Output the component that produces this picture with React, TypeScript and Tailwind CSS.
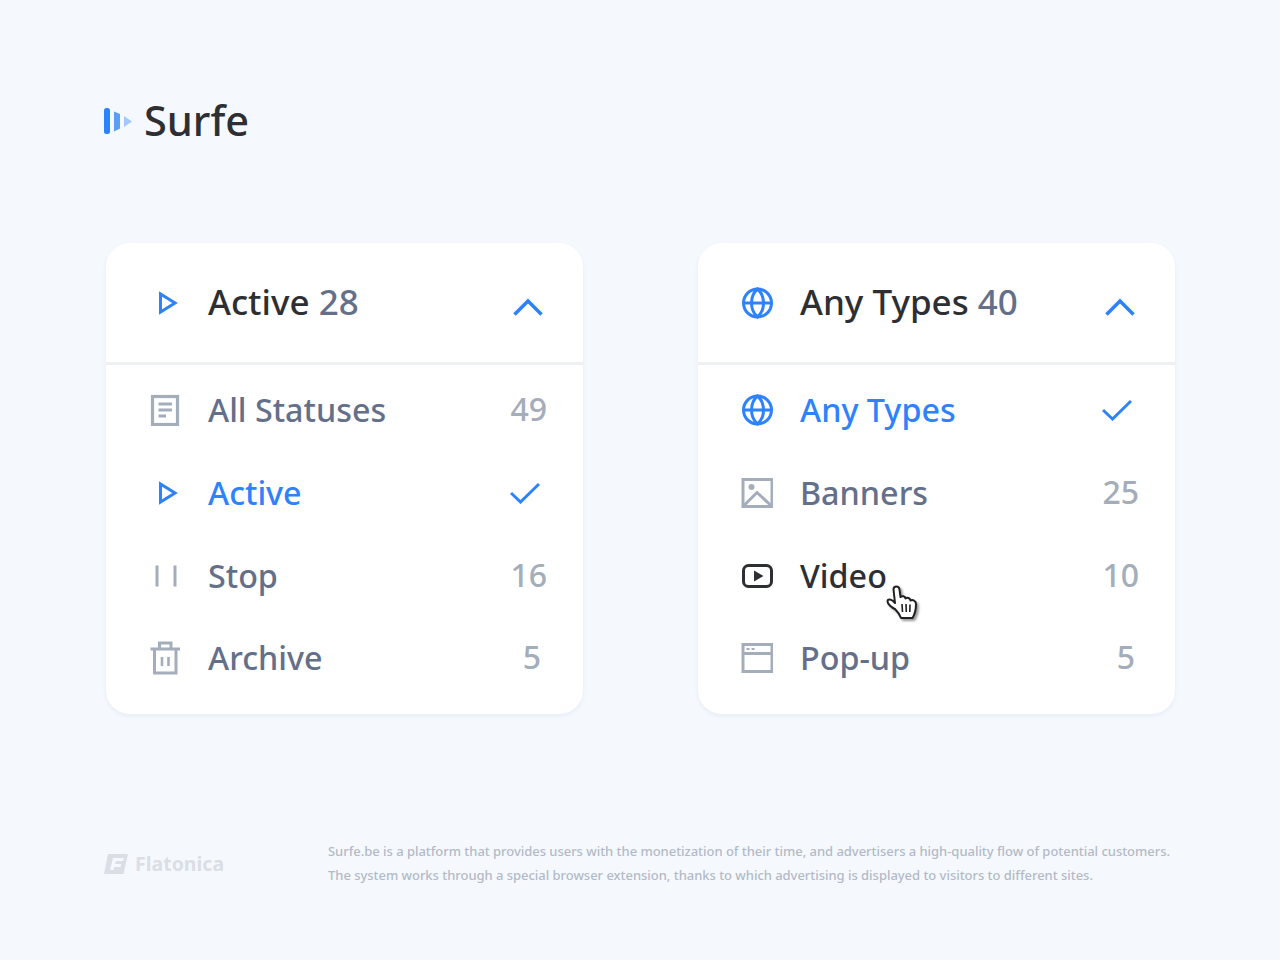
import React from 'react';

const BLUE = '#2e82fb';

const PlayIcon = () => (
  <svg width="32" height="32" viewBox="0 0 32 32" fill="none" stroke={BLUE} strokeWidth="3">
    <path d="M11.5 7 V25 L26 16 Z" />
  </svg>
);

const GlobeIcon = ({ color = BLUE }: { color?: string }) => (
  <svg width="32" height="32" viewBox="0 0 32 32" fill="none" stroke={color} strokeWidth="3">
    <circle cx="16.5" cy="16" r="14" />
    <path d="M2.5 16 H30.5 M16.5 2 C8.5 9 8.5 23 16.5 30 C24.5 23 24.5 9 16.5 2 Z" />
  </svg>
);

const DocIcon = () => (
  <svg width="32" height="32" viewBox="0 0 32 32" fill="none" stroke="#a4adba" strokeWidth="3.2">
    <rect x="3.5" y="2.5" width="25" height="28" />
    <path d="M9.5 10 H23 M9.5 16 H23 M9.5 22 H17" strokeWidth="2.8" />
  </svg>
);

const PauseIcon = () => (
  <svg width="32" height="32" viewBox="0 0 32 32" fill="none" stroke="#a4adba" strokeWidth="3">
    <path d="M8 5.5 V26.5 M26 5.5 V26.5" />
  </svg>
);

const TrashIcon = () => (
  <svg width="32" height="36" viewBox="0 0 32 36" fill="none" stroke="#a4adba" strokeWidth="3">
    <path d="M1.5 9 H31 M5.5 9 V33 H27 V9 M10.5 9 V3 H22 V9" />
    <path d="M13 17 V26 M19.5 17 V26" strokeWidth="2.6" />
  </svg>
);

const ImageIcon = () => (
  <svg width="32" height="32" viewBox="0 0 32 32" fill="none" stroke="#a4adba" strokeWidth="3">
    <rect x="2" y="2.5" width="29" height="27" />
    <circle cx="10.5" cy="10" r="3" fill="#a4adba" stroke="none" />
    <path d="M3 28.5 L16 15.5 L30 28.5" />
  </svg>
);

const VideoIcon = () => (
  <svg width="32" height="32" viewBox="0 0 32 32" fill="none">
    <rect x="2.5" y="5.5" width="28" height="21" rx="5" stroke="#2d2f33" strokeWidth="3" />
    <path d="M13 10.5 V21.5 L22.5 16 Z" fill="#2d2f33" />
  </svg>
);

const PopupIcon = () => (
  <svg width="32" height="32" viewBox="0 0 32 32" fill="none" stroke="#a4adba" strokeWidth="3">
    <rect x="2" y="2.5" width="29" height="27" />
    <path d="M2 11.5 H31" />
    <path d="M5.5 7 H8.5 M10.5 7 H13.5" strokeWidth="2" />
  </svg>
);

const Chevron = () => (
  <svg width="30" height="18" viewBox="0 0 30 18" fill="none" stroke={BLUE} strokeWidth="3.6">
    <path d="M1.5 16.5 L15 3 L28.5 16.5" />
  </svg>
);

const Check = () => (
  <svg width="30" height="22" viewBox="0 0 30 22" fill="none" stroke={BLUE} strokeWidth="3">
    <path d="M1 11 L10.5 20 L29 2" />
  </svg>
);

const Cursor = () => (
  <svg width="38" height="40" viewBox="0 0 38 40" className="absolute left-[884px] top-[584px]">
    <path
      d="M11 25 C8 24 3.5 20 3.5 17.5 C3.5 15 6.5 15 9 17 L11 19 L9.5 5.5 C9.5 1.5 15 1.5 15.5 5.5 L16.5 13 C18.5 11.5 21 12 21.5 14.5 C23.5 13 26 14 26.5 16.5 C28.5 15.5 32 16.5 32 20 C32 25 31 30 28.5 34 L17 34 C15.5 30 13 27 11 25 Z"
      fill="#fff"
      stroke="#1f2023"
      strokeWidth="2"
      strokeLinejoin="round"
      style={{ filter: 'drop-shadow(2px 2px 1px rgba(0,0,0,0.4))' }}
    />
    <path d="M18 20 L18.5 28 M22 20 L22.3 28 M26 20.5 L25.8 28" stroke="#1f2023" strokeWidth="1.6" />
  </svg>
);

interface Item {
  icon: React.ReactNode;
  label: string;
  count?: string;
  tone?: 'blue' | 'dark';
  inset?: string;
}

const Row = ({ item }: { item: Item }) => (
  <div className="flex h-[82.7px] items-center pl-[43px] pr-[36px]">
    <div className="flex h-9 w-8 items-center justify-center">{item.icon}</div>
    <span
      className={`ml-[27px] flex-1 -translate-y-px text-[32.3px] font-medium leading-none ${
        item.tone === 'blue' ? 'text-[#2e82fb]' : item.tone === 'dark' ? 'text-[#2d2f33]' : 'text-[#64708a]'
      }`}
    >
      {item.label}
    </span>
    {item.count ? (
      <span className={`-translate-y-px text-[32px] font-medium leading-none text-[#a4adba] ${item.inset ?? ''}`}>{item.count}</span>
    ) : (
      <span className="mr-[7px]">
        <Check />
      </span>
    )}
  </div>
);

const Card = ({ icon, title, total, items }: { icon: React.ReactNode; title: string; total: string; items: Item[] }) => (
  <div className="h-[471px] w-[477px] rounded-[24px] bg-white shadow-[0_2px_4px_rgba(180,195,225,0.22)]">
    <div className="flex h-[119px] items-center pl-[43px] pr-[40px]">
      <div className="flex h-9 w-8 items-center justify-center">{icon}</div>
      <span className="ml-[27px] flex-1 -translate-y-px text-[35px] font-medium leading-none text-[#2d2f33]">
        {title} <span className="text-[#64708a]">{total}</span>
      </span>
      <span className="mt-[8px]">
        <Chevron />
      </span>
    </div>
    <div className="h-[3px] bg-[#eff0f4]" />
    <div className="pt-[4px]">
      {items.map(item => (
        <Row key={item.label} item={item} />
      ))}
    </div>
  </div>
);

const statuses: Item[] = [
  { icon: <DocIcon />, label: 'All Statuses', count: '49' },
  { icon: <PlayIcon />, label: 'Active', tone: 'blue' },
  { icon: <PauseIcon />, label: 'Stop', count: '16' },
  { icon: <TrashIcon />, label: 'Archive', count: '5', inset: 'mr-[6px]' },
];

const types: Item[] = [
  { icon: <GlobeIcon />, label: 'Any Types', tone: 'blue' },
  { icon: <ImageIcon />, label: 'Banners', count: '25' },
  { icon: <VideoIcon />, label: 'Video', count: '10', tone: 'dark' },
  { icon: <PopupIcon />, label: 'Pop-up', count: '5', inset: 'mr-[4px]' },
];

export default function App() {
  return (
    <div className="relative h-[960px] w-[1280px] overflow-hidden bg-[#f5f9fe] font-['Noto_Sans','Open_Sans',sans-serif]">
      <div className="flex h-[243px] items-start pl-[104px] pt-[97px]">
        <svg width="28" height="48" viewBox="0 0 28 48">
          <rect x="0" y="11" width="6" height="26" rx="2.5" fill="#2e82fb" />
          <path d="M10 14.5 L16 17 V31.5 L10 34.5 Z" fill="#5c9dfb" />
          <path d="M20 19 L28 24.5 L20 30 Z" fill="#a3c8fd" />
        </svg>
        <span className="ml-[12px] -translate-y-px text-[41.5px] font-medium leading-[48px] text-[#2d2f33]">Surfe</span>
      </div>

      <div className="flex gap-[115px] pl-[106px]">
        <Card icon={<PlayIcon />} title="Active" total="28" items={statuses} />
        <Card icon={<GlobeIcon />} title="Any Types" total="40" items={types} />
      </div>

      <div className="flex pl-[104px] pt-[125px]">
        <div className="flex w-[224px] items-center gap-[7px] pt-[2px]">
          <svg width="24" height="20" viewBox="0 0 24 20" fill="#dbdee5">
            <path
              d="M4 0 H24 L19.5 20 H0 Z M9 4 L6 16 H9.5 L10.3 13 H16.5 L17.2 10 H11 L12 7 H19 L19.7 4 Z"
              fillRule="evenodd"
            />
          </svg>
          <span className="text-[19.5px] font-bold leading-none text-[#dbdee5]">Flatonica</span>
        </div>
        <p className="text-[13px] font-medium leading-[24px] tracking-[-0.035px] text-[#b3b9c7]">
          Surfe.be is a platform that provides users with the monetization of their time, and advertisers a high-quality flow of potential customers.
          <br />
          The system works through a special browser extension, thanks to which advertising is displayed to visitors to different sites.
        </p>
      </div>

      <Cursor />
    </div>
  );
}
